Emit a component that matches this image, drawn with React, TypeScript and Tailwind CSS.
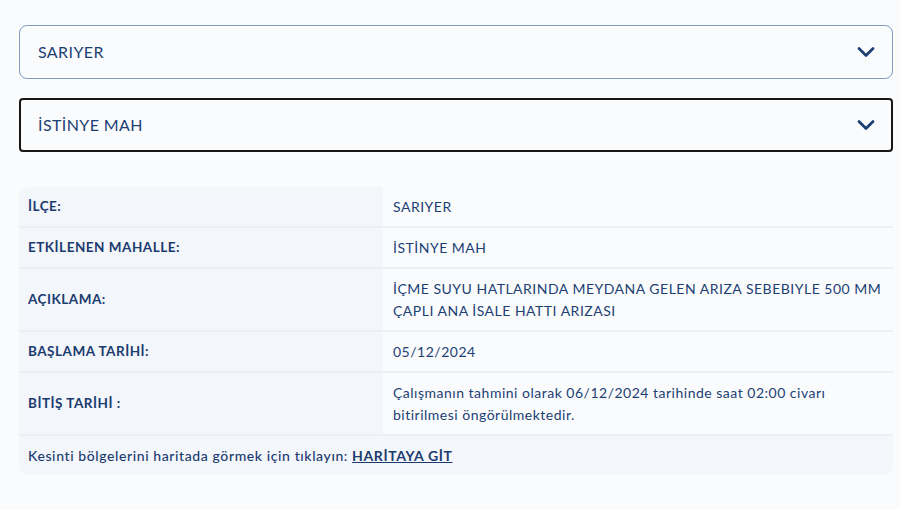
import React from "react";
import { FiChevronDown } from "react-icons/fi";

interface Row {
  label: string;
  value: React.ReactNode;
  tall?: boolean;
}

const rows: Row[] = [
  { label: "İLÇE:", value: "SARIYER" },
  { label: "ETKİLENEN MAHALLE:", value: "İSTİNYE MAH" },
  {
    label: "AÇIKLAMA:",
    value: "İÇME SUYU HATLARINDA MEYDANA GELEN ARIZA SEBEBIYLE 500 MM ÇAPLI ANA İSALE HATTI ARIZASI",
    tall: true,
  },
  { label: "BAŞLAMA TARİHİ:", value: "05/12/2024" },
  {
    label: "BİTİŞ TARİHİ :",
    value: "Çalışmanın tahmini olarak 06/12/2024 tarihinde saat 02:00 civarı bitirilmesi öngörülmektedir.",
    tall: true,
  },
];

const Select: React.FC<{ text: string; active?: boolean }> = ({ text, active }) => (
  <div
    className={
      active
        ? "flex items-center justify-between h-[54px] pl-[17px] pr-[11px] rounded-[4px] border-2 border-[#161616] bg-[#f9fbfd]"
        : "flex items-center justify-between h-[54px] pl-[18px] pr-[12px] rounded-[8px] border border-[#7f9cc4] bg-[#f9fbfd]"
    }
  >
    <span className="text-[16px] tracking-[0.4px] text-[#1d3f74]">{text}</span>
    <FiChevronDown className="text-[#1d3f74] w-[28px] h-[28px]" strokeWidth={2.4} />
  </div>
);

export default function App() {
  return (
    <main
      className="h-[510px] overflow-hidden bg-[#f9fbfd] pl-[19px] pr-[7px] pt-[25px] text-[#1d3f74] tracking-[0.5px]"
      style={{ fontFamily: "Lato, 'Noto Sans', sans-serif" }}
    >
      <div className="flex flex-col gap-[19px]">
        <Select text="SARIYER" />
        <Select text="İSTİNYE MAH" active />
      </div>

      <section className="mt-[35px] rounded-[10px] overflow-hidden bg-[#f3f6fa]">
        {rows.map((r) => (
          <div key={r.label} className="grid grid-cols-[364px_1fr] border-b-2 border-[#eceff3]">
            <div className="flex items-center px-[9px] text-[13.5px] font-bold text-[#1b3b6f]">
              {r.label}
            </div>
            <div
              className={
                "flex items-center pl-[10px] pr-[5px] bg-[#f9fbfd] text-[14px] leading-[22px] " +
                (r.tall ? "min-h-[61px]" : "min-h-[39px]")
              }
            >
              {r.value}
            </div>
          </div>
        ))}
        <div className="flex items-center h-[39px] px-[9px] text-[14px] tracking-[0.6px] font-medium text-[#1b3b6f]">
          Kesinti bölgelerini haritada görmek için tıklayın:&nbsp;
          <a href="#" className="font-bold underline">HARİTAYA GİT</a>
        </div>
      </section>
    </main>
  );
}
